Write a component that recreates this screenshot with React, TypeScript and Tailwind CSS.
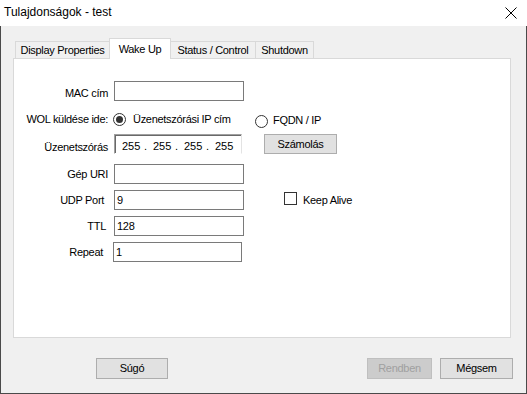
import React from "react";

const font = { fontFamily: '"Liberation Sans", Arial, sans-serif' };

function TextBox({ value = "", w = "w-[130px]" }: { value?: string; w?: string }) {
  return (
    <div
      className={`${w} h-[20px] border border-[#7a7a7a] bg-white flex items-center pl-[2px] text-black`}
    >
      {value}
    </div>
  );
}

function Radio({ checked }: { checked?: boolean }) {
  return (
    <div className="w-[13px] h-[13px] rounded-full border border-[#333333] bg-white flex items-center justify-center shrink-0">
      {checked && <div className="w-[7px] h-[7px] rounded-full bg-[#333333]" />}
    </div>
  );
}

function Label({ text, extra = "" }: { text: string; extra?: string }) {
  return <div className={`w-[94px] text-right shrink-0 leading-[13px] ${extra}`}>{text}</div>;
}

function Tab({ label, w, selected }: { label: string; w: string; selected?: boolean }) {
  if (selected) {
    return (
      <div
        className={`${w} h-[21px] -ml-px mb-[-1px] relative z-10 bg-white border border-b-0 border-[#d9d9d9] flex items-center justify-center leading-[13px]`}
      >
        {label}
      </div>
    );
  }
  return (
    <div
      className={`${w} h-[17px] -ml-px bg-[#f0f0f0] border border-b-0 border-[#d9d9d9] flex items-center justify-center leading-[13px] pt-[1px]`}
    >
      {label}
    </div>
  );
}

function Btn({ label, w, disabled }: { label: string; w: string; disabled?: boolean }) {
  return (
    <div
      className={`${w} h-[21px] flex items-center justify-center border ${
        disabled ? "bg-[#cccccc] border-[#bfbfbf] text-[#a0a0a0]" : "bg-[#e1e1e1] border-[#adadad] text-black"
      }`}
    >
      {label}
    </div>
  );
}

export default function App() {
  return (
    <div className="w-[527px] h-[394px] flex flex-col bg-white overflow-hidden" style={font}>
      {/* Title bar */}
      <div className="h-[26px] shrink-0 bg-white flex items-center justify-between pl-[4px] pr-[10px]">
        <div className="text-[12px] text-black pb-[2px] leading-[14px]">Tulajdonságok - test</div>
        <svg width="12" height="12" viewBox="0 0 12 12" className="mb-[1px]">
          <path d="M0.5 0.5 L11.5 11.5 M11.5 0.5 L0.5 11.5" stroke="#000" strokeWidth="1" fill="none" />
        </svg>
      </div>

      {/* Body */}
      <div className="flex-1 bg-[#f0f0f0] border-l border-r border-b border-[#4a4a4a] flex flex-col text-[11px] tracking-[-0.3px] text-black">
        <div className="pt-[12px] pl-[12px]">
          {/* Tabs */}
          <div className="flex items-end h-[20px] pl-[3px]">
            <Tab label="Display Properties" w="w-[95px]" />
            <Tab label="Wake Up" w="w-[62px]" selected />
            <Tab label="Status / Control" w="w-[86px]" />
            <Tab label="Shutdown" w="w-[59px]" />
          </div>

          {/* Panel */}
          <div className="w-[498px] h-[280px] bg-white border border-[#d9d9d9] flex flex-col">
            {/* MAC */}
            <div className="flex items-center h-[20px] mt-[22px]">
              <Label text="MAC cím" extra="pt-[4px]" />
              <div className="ml-[6px]">
                <TextBox />
              </div>
            </div>

            {/* WOL */}
            <div className="flex items-center h-[20px] mt-[9px]">
              <Label text="WOL küldése ide:" extra="pb-[2px]" />
              <div className="ml-[5px] w-[142px] flex items-center">
                <div className="pb-[1px]">
                  <Radio checked />
                </div>
                <div className="ml-[7px] leading-[13px] pb-[2px]">Üzenetszórási IP cím</div>
              </div>
              <div className="flex items-center">
                <div className="mt-[3px]">
                  <Radio />
                </div>
                <div className="ml-[5px] leading-[13px]">FQDN / IP</div>
              </div>
            </div>

            {/* Üzenetszórás */}
            <div className="flex items-center h-[20px] mt-[4px]">
              <Label text="Üzenetszórás" extra="pt-[7px]" />
              <div className="ml-[6px] w-[128px] h-[20px] bg-white border-t border-l border-[#a0a0a0] border-r border-r-[#e3e3e3] border-b border-b-white shadow-[inset_1px_1px_0_#696969] flex items-center pl-[7px] pt-[4px] tracking-normal">
                <span className="w-[22px]">255</span>
                <span className="w-[9px]">.</span>
                <span className="w-[22px]">255</span>
                <span className="w-[9px]">.</span>
                <span className="w-[22px]">255</span>
                <span className="w-[9px]">.</span>
                <span className="w-[22px]">255</span>
              </div>
              <div className="ml-[22px]">
                <div className="w-[73px] h-[20px] flex items-center justify-center border bg-[#e1e1e1] border-[#adadad]">
                  Számolás
                </div>
              </div>
            </div>

            {/* Gép URI */}
            <div className="flex items-center h-[20px] mt-[10px]">
              <Label text="Gép URI" />
              <div className="ml-[6px]">
                <TextBox />
              </div>
            </div>

            {/* UDP Port */}
            <div className="flex items-center h-[20px] mt-[6px]">
              <Label text="UDP Port" extra="pr-[4px]" />
              <div className="ml-[6px]">
                <TextBox value="9" />
              </div>
              <div className="ml-[40px] flex items-center">
                <div className="w-[13px] h-[13px] border border-[#333333] bg-white mb-[3px]" />
                <div className="ml-[6px] leading-[13px]">Keep Alive</div>
              </div>
            </div>

            {/* TTL */}
            <div className="flex items-center h-[20px] mt-[6px]">
              <Label text="TTL" extra="pr-[2px]" />
              <div className="ml-[6px]">
                <TextBox value="128" />
              </div>
            </div>

            {/* Repeat */}
            <div className="flex items-center h-[20px] mt-[6px]">
              <Label text="Repeat" extra="pr-[5px]" />
              <div className="ml-[5px]">
                <TextBox value="1" w="w-[129px]" />
              </div>
            </div>
          </div>
        </div>

        {/* Bottom buttons */}
        <div className="flex items-center mt-[20px]">
          <div className="ml-[95px]">
            <Btn label="Súgó" w="w-[72px]" />
          </div>
          <div className="ml-auto">
            <Btn label="Rendben" w="w-[65px]" disabled />
          </div>
          <div className="ml-[8px] mr-[13px]">
            <Btn label="Mégsem" w="w-[73px]" />
          </div>
        </div>
      </div>
    </div>
  );
}
